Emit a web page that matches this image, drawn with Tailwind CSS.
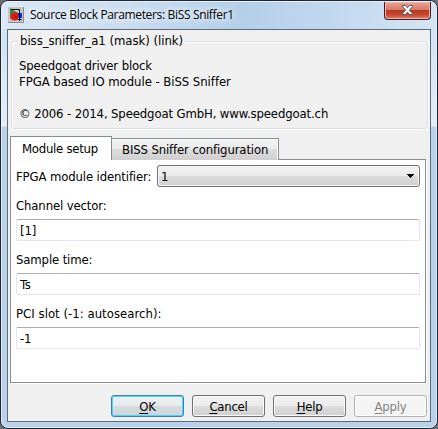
<!DOCTYPE html>
<html lang="en">
<head>
<meta charset="utf-8">
<title>Source Block Parameters: BiSS Sniffer1</title>
<script src="https://cdn.jsdelivr.net/npm/@tailwindcss/browser@4"></script>
</head>
<body class="w-[438px] h-[429px] overflow-hidden bg-[#6b7076] text-[13px] leading-[16px] tracking-[-0.13px] text-black whitespace-nowrap font-['DejaVu_Sans_Condensed','DejaVu_Sans',sans-serif] [font-stretch:condensed]">
<div class="w-[438px] h-[429px] border border-[#20242c] rounded-[8px] overflow-hidden bg-[#b9d1ea] bg-[linear-gradient(180deg,#d3e2f3_0px,#d6e5f5_50px,#e3edf8_125px,#b9d1ea_126px,#b9d1ea_100%)]">
  <div class="h-full border border-[#e9f3fc]/80 rounded-[7px] px-[5px] pb-[5px] flex flex-col">
    <header class="h-[27px] shrink-0 -mx-[5px] px-[5px] flex items-start rounded-t-[6px] bg-[linear-gradient(100deg,#dce8f5_0%,#c9dcf0_30%,#b5cfe9_55%,#c1d7ee_75%,#d5e5f5_100%)]">
      <svg class="mt-[5px] ml-px shrink-0" width="16" height="16" viewBox="0 0 16 16">
        <rect width="16" height="16" fill="#c6c5c8"/>
        <path d="M0 15.5H15.5V0" fill="none" stroke="#8d8b91"/>
        <path d="M2 1v11L10 6z" fill="#129b3c"/>
        <rect x="9" y="6" width="5" height="5" fill="#1b2bd8"/>
        <path d="M3 2.500H11.500V14M9.500 12.500h4" fill="none" stroke="#000"/>
        <circle cx="6.500" cy="9.500" r="3.900" fill="#f0141c"/>
        <path d="M6.500 8v2H9" fill="none" stroke="#700"/>
      </svg>
      <h1 class="ml-[6px] mt-[5px] text-[12px] tracking-[-0.34px] font-['Open_Sans','Noto_Sans',sans-serif] [font-stretch:normal] [text-shadow:0_0_6px_#fff,0_0_8px_#fff]">Source Block Parameters: BiSS Sniffer1</h1>
      <button class="ml-auto mr-0 w-[47px] h-[18px] rounded-b-[4px] border border-t-0 border-[#4b1a20] shadow-[inset_0_0_0_1px_#eeb5a8] bg-[linear-gradient(180deg,#e6a497_0%,#d67c6b_45%,#bb3822_50%,#c84831_75%,#dc8065_100%)] flex justify-center" aria-label="Close">
        <svg class="mt-[2px]" width="13" height="12" viewBox="0 0 13 12"><path d="M1.500 1.500h3l2 2.300 2-2.300h3v1L8.500 6l3 3.500v1h-3l-2-2.300-2 2.300h-3v-1l3-3.500-3-3.500z" fill="#fafafa" stroke="#505467"/></svg>
      </button>
    </header>
    <main class="flex-1 border border-[#5b6b78] bg-[#f0f0f0]">
      <fieldset class="relative mt-[11px] ml-[3px] mr-[2px] h-[88px] rounded-[3px] border border-[#d5dfe5] shadow-[inset_1px_1px_0_#fff,0_1px_0_#fff,1px_0_0_#fff]">
        <span class="absolute left-[6px] top-[-9px] px-[2px] h-[16px] bg-[#f0f0f0] tracking-[-0.03px]">biss_sniffer_a1 (mask) (link)</span>
        <div class="pl-[7px] pt-[16px]">
          <p>Speedgoat driver block</p>
          <p class="tracking-[-0.05px]">FPGA based IO module - BiSS Sniffer</p>
          <p class="mt-[16px]">© 2006 - 2014, Speedgoat GmbH, www.speedgoat.ch</p>
        </div>
      </fieldset>
      <nav class="mt-[7px] ml-[2px] h-[24px] flex items-end">
        <span class="relative z-10 w-[102px] h-[24px] border border-b-0 border-[#898c95] bg-white pl-[11px] pt-[4px] tracking-[-0.25px]">Module setup</span>
        <span class="w-[167px] h-[22px] border border-l-0 border-b-0 border-[#898c95] shadow-[inset_0_1px_0_#fff,inset_-1px_0_0_#fff] bg-[linear-gradient(180deg,#f2f2f2_0%,#ebebeb_48%,#dddddd_50%,#cfcfcf_100%)] pl-[10px] pt-[3px] tracking-[-0.13px]">BISS Sniffer configuration</span>
      </nav>
      <section class="-mt-px ml-[2px] w-[416px] h-[224px] border border-[#898c95] bg-white shadow-[1px_1px_0_#fff] pl-[5px] pt-[5px]">
        <div class="flex h-[22px]">
          <label class="w-[141px] pt-[4px]">FPGA module identifier:</label>
          <div class="w-[263px] h-[22px] rounded-[3px] border border-[#707070] shadow-[inset_0_0_0_1px_#fafafa] bg-[linear-gradient(180deg,#f2f2f2_0%,#ebebeb_48%,#dddddd_50%,#cfcfcf_100%)] flex justify-between pl-[3px] pr-[5px] pt-[3px]">
            <span>1</span>
            <svg class="mt-[5px]" width="7" height="4" viewBox="0 0 7 4" shape-rendering="crispEdges"><path d="M0 0h7v1H6v1H5v1H4v1H3V3H2V2H1V1H0z"/></svg>
          </div>
        </div>
        <label class="block mt-[10px] h-[22px] pt-px">Channel vector:</label>
        <div class="w-[404px] h-[22px] rounded-[2px] border border-[#e2e6ee] border-t-[#abadb3] pl-[3px] pt-[3px]">[1]</div>
        <label class="block mt-[10px] h-[22px] pt-px">Sample time:</label>
        <div class="w-[404px] h-[22px] rounded-[2px] border border-[#e2e6ee] border-t-[#abadb3] pl-[3px] pt-[3px]">Ts</div>
        <label class="block mt-[10px] h-[22px] pt-px tracking-[0.03px]">PCI slot (-1: autosearch):</label>
        <div class="w-[404px] h-[22px] rounded-[2px] border border-[#e2e6ee] border-t-[#abadb3] pl-[3px] pt-[3px]">-1</div>
      </section>
      <footer class="mt-[12px] pr-[3px] flex justify-end gap-[8px] text-center tracking-[-0.25px] [&_u]:underline-offset-2">
        <button class="w-[73px] h-[22px] rounded-[3px] border border-[#3c7fb1] shadow-[inset_0_0_0_1px_#46d8fb] bg-[linear-gradient(180deg,#eff2f4_0%,#e6eaed_48%,#d6dce0_50%,#cdd3d7_100%)] pt-px"><u>O</u>K</button>
        <button class="w-[73px] h-[22px] rounded-[3px] border border-[#707070] shadow-[inset_0_0_0_1px_#fafafa] bg-[linear-gradient(180deg,#f2f2f2_0%,#ebebeb_48%,#dddddd_50%,#cfcfcf_100%)] pt-px"><u>C</u>ancel</button>
        <button class="w-[73px] h-[22px] rounded-[3px] border border-[#707070] shadow-[inset_0_0_0_1px_#fafafa] bg-[linear-gradient(180deg,#f2f2f2_0%,#ebebeb_48%,#dddddd_50%,#cfcfcf_100%)] pt-px"><u>H</u>elp</button>
        <button class="w-[73px] h-[22px] rounded-[3px] border border-[#adb2b5] shadow-[inset_0_0_0_1px_#fcfcfc] bg-[#f4f4f4] text-[#838383] pt-px"><u>A</u>pply</button>
      </footer>
    </main>
  </div>
</div>
</body>
</html>
